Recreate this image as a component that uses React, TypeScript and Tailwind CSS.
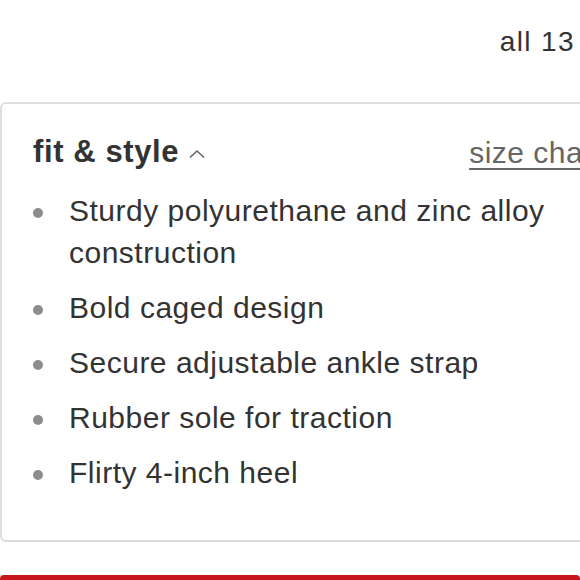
const features = [
  ["Sturdy polyurethane and zinc alloy", "construction"],
  ["Bold caged design"],
  ["Secure adjustable ankle strap"],
  ["Rubber sole for traction"],
  ["Flirty 4-inch heel"],
];

export default function App() {
  return (
    <div className="w-[580px] h-[580px] overflow-hidden bg-white font-['Liberation_Sans',Arial,sans-serif] text-[#333]">
      <div className="h-[102px] flex justify-end pr-[5px] pt-[27px]">
        <span className="text-[28px] leading-[30px] tracking-[1.4px]">all 13</span>
      </div>

      <div className="w-[640px] border-2 border-[#dedede] rounded-[6px] pl-[31px] pt-[30px] pb-[46px]">
        <div className="flex items-start">
          <div className="flex items-center">
            <h3 className="text-[31px] leading-[36px] font-bold tracking-[0.6px]">fit &amp; style</h3>
            <svg width="18" height="10" viewBox="0 0 18 10" className="ml-[9px] mt-[4px]">
              <path d="M2 8.5 L9 2 L16 8.5" fill="none" stroke="#666" strokeWidth="1.6" />
            </svg>
          </div>
          <a className="ml-[263px] text-[30px] leading-[36px] tracking-[0.5px] text-[#666] underline underline-offset-[5px] decoration-[2px] mt-[1px] whitespace-nowrap">
            size chart
          </a>
        </div>

        <ul className="mt-[19px] flex flex-col gap-[13px]">
          {features.map((lines) => (
            <li key={lines[0]} className="flex items-start">
              <span className="mt-[18px] w-[10px] h-[10px] rounded-full bg-[#8c8c8c] shrink-0" />
              <div className="ml-[26px] text-[30px] leading-[42px] tracking-[0.5px]">
                {lines.map((l) => (
                  <div key={l}>{l}</div>
                ))}
              </div>
            </li>
          ))}
        </ul>
      </div>

      <div className="mt-[33px] h-[6px] bg-[#c8161d] rounded-t-[4px]" />
    </div>
  );
}
